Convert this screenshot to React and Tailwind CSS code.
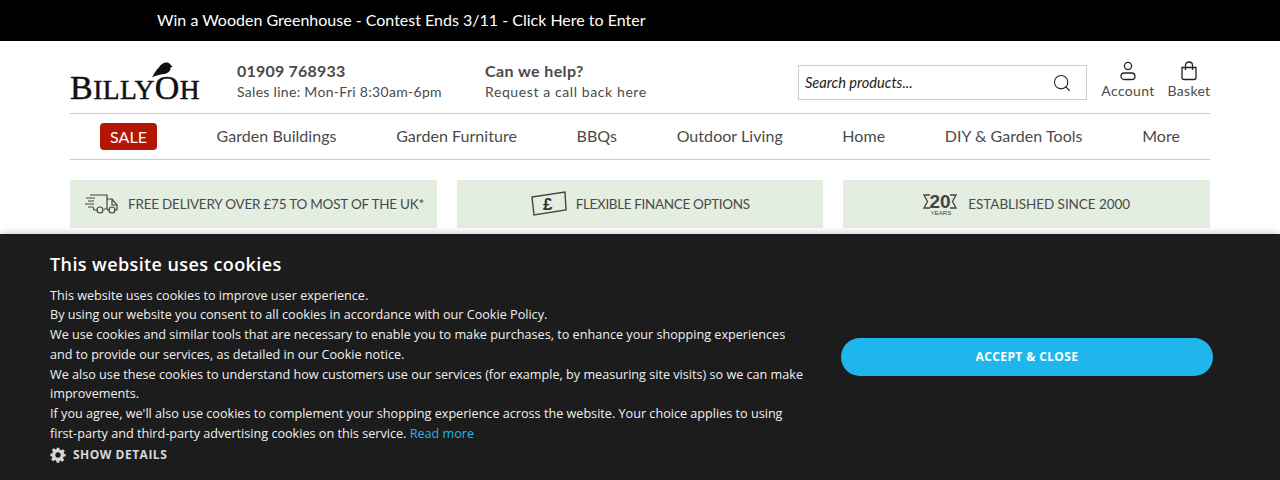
import React from "react";
import { Search } from "lucide-react";

const navLinks = [
  "Garden Buildings",
  "Garden Furniture",
  "BBQs",
  "Outdoor Living",
  "Home",
  "DIY & Garden Tools",
  "More",
];

const BirdLogo = () => (
  <div className="relative w-[130px] h-[40px] shrink-0">
    <div className="absolute left-0 bottom-[-2px] whitespace-nowrap font-['Liberation_Serif',serif] text-[#111] leading-none tracking-[0.45px] [-webkit-text-stroke:0.5px_#111]">
      <span className="text-[34px]">B</span>
      <span className="text-[27.5px]">ILLY</span>
      <span className="text-[34px]">O</span>
      <span className="text-[27.5px]">H</span>
    </div>
    <svg className="absolute left-[82px] top-[-1px]" width="21" height="16" viewBox="2 2 27 19">
      <path d="M2 21 C5 16 7 12 11 8 C13 4 18 1 22 2 C25 3 26 5 27 6 L29 7 L26 8 C26 13 22 17 15 17 C11 18 6 19 2 21Z" fill="#111" />
    </svg>
  </div>
);

const AccountIcon = () => (
  <svg width="18" height="20" viewBox="0 0 18 20" fill="none" stroke="#222" strokeWidth="1.3">
    <circle cx="9" cy="5" r="3.6" />
    <rect x="2" y="12" width="14" height="6.5" rx="3.25" />
  </svg>
);

const BagIcon = () => (
  <svg width="18" height="20" viewBox="0 0 18 20" fill="none" stroke="#222" strokeWidth="1.3">
    <path d="M2 6.5 H16 V16.5 Q16 18.5 14 18.5 H4 Q2 18.5 2 16.5 Z" />
    <path d="M5.5 9 V4.5 Q5.5 1 9 1 Q12.5 1 12.5 4.5 V9" />
  </svg>
);

const TruckIcon = () => (
  <svg width="34" height="22" viewBox="0 0 34 22" fill="none" stroke="#444" strokeWidth="1.2" className="shrink-0">
    <path d="M5 2 H22 V16 H19 M12 17 H9 L8 14 M22 6 H27 L32 12 V17 H29 M22 17 H24" />
    <circle cx="15" cy="17" r="3" />
    <circle cx="27" cy="17" r="3" />
    <path d="M27 6 V12 H32 M1 5 H10 M3 8 H9 M0 11 H9 M3 14 H8" />
  </svg>
);

const PoundIcon = () => (
  <svg width="36" height="26" viewBox="0 0 36 26" fill="none" className="shrink-0">
    <path d="M1 6 L34 1 L35 19 L3 24 Z" stroke="#444" strokeWidth="1.4" />
    <text x="12" y="19" fill="#333" fontSize="17" fontWeight="700" fontFamily="Liberation Sans, sans-serif">£</text>
  </svg>
);

const YearsIcon = () => (
  <svg width="34" height="24" viewBox="0 0 34 24" fill="none" className="shrink-0">
    <path d="M7 3 H1 L4.5 9.5 L1 16 H7" stroke="#444" strokeWidth="1.3" />
    <path d="M27 3 H33 L29.5 9.5 L33 16 H27" stroke="#444" strokeWidth="1.3" />
    <text x="6.5" y="16" fill="#444" fontSize="19" fontWeight="700" fontFamily="Liberation Sans, sans-serif">20</text>
    <text x="7.5" y="23" fill="#444" fontSize="6.2" fontFamily="Liberation Sans, sans-serif">YEARS</text>
  </svg>
);

const GearIcon = () => (
  <svg width="16" height="16" viewBox="0 0 24 24" className="shrink-0">
    <path
      fill="#d8d8d8"
      fillRule="evenodd"
      d="M10 1h4l.7 3.2 1.9.8 2.8-1.8 2.8 2.8-1.8 2.8.8 1.9L23.5 10v4l-3.3.7-.8 1.9 1.8 2.8-2.8 2.8-2.8-1.8-1.9.8L14 23.5h-4l-.7-3.3-1.9-.8-2.8 1.8-2.8-2.8 1.8-2.8-.8-1.9L.5 14v-4l3.3-.7.8-1.9L2.8 4.6l2.8-2.8 2.8 1.8 1.9-.8L10 1Zm2 7a4 4 0 1 0 0 8 4 4 0 0 0 0-8Z"
    />
  </svg>
);

const App = () => {
  return (
    <div className="relative w-[1280px] h-[480px] overflow-hidden bg-white font-['Lato',sans-serif] text-[#4a4a4a]">
      <div className="h-[41px] bg-black flex items-center pl-[157px] pb-[2px] text-white text-[16px]">
        Win a Wooden Greenhouse - Contest Ends 3/11 - Click Here to Enter
      </div>

      <div className="px-[70px]">
        <div className="h-[73px] pt-[11px] flex items-center border-b border-[#ccc]">
          <BirdLogo />
          <div className="ml-[37px] w-[248px] mb-[2px]">
            <div className="text-[16px] leading-[20px] font-bold tracking-[0.2px]">01909 768933</div>
            <div className="text-[14px] leading-[20px] mt-[1px] tracking-[0.3px]">Sales line: Mon-Fri 8:30am-6pm</div>
          </div>
          <div className="mb-[2px]">
            <div className="text-[16px] leading-[20px] font-bold tracking-[0.4px]">Can we help?</div>
            <div className="text-[14px] leading-[20px] mt-[1px] tracking-[0.6px]">Request a call back here</div>
          </div>
          <div className="ml-auto flex items-center">
            <div className="w-[289px] h-[35px] border border-[#ccc] flex items-center justify-between pl-[6px] pr-[14px]">
              <span className="text-[14.6px] italic text-[#222]">Search products...</span>
              <Search size={20} strokeWidth={1.3} className="text-[#222]" />
            </div>
            <div className="ml-[14px] w-[54px] mb-[6px] flex flex-col items-center">
              <AccountIcon />
              <span className="text-[14px] leading-[16px] mt-[2px] tracking-[0.35px]">Account</span>
            </div>
            <div className="ml-[13px] w-[42px] mb-[6px] flex flex-col items-center">
              <BagIcon />
              <span className="text-[14px] leading-[16px] mt-[2px] tracking-[0.3px]">Basket</span>
            </div>
          </div>
        </div>

        <nav className="h-[46px] flex items-center justify-between px-[30px] border-b border-[#ccc] text-[16px]">
          <span className="w-[57px] h-[27px] flex items-center justify-center rounded-[4px] bg-[#b31604] text-white">SALE</span>
          {navLinks.map((link) => (
            <span key={link} className="mb-[2px] tracking-[0.05px]">{link}</span>
          ))}
        </nav>

        <div className="mt-[20px] grid grid-cols-3 gap-[20px] text-[13.5px] whitespace-nowrap">
          <div className="h-[48px] bg-[#e3ede0] flex items-center pl-[15px] gap-[9px] tracking-[-0.22px]">
            <TruckIcon />
            <span>FREE DELIVERY OVER £75 TO MOST OF THE UK*</span>
          </div>
          <div className="h-[48px] bg-[#e3ede0] flex items-center pl-[74px] gap-[9px] tracking-[-0.35px]">
            <PoundIcon />
            <span>FLEXIBLE FINANCE OPTIONS</span>
          </div>
          <div className="h-[48px] bg-[#e3ede0] flex items-center pl-[80px] gap-[11px] tracking-[-0.05px]">
            <YearsIcon />
            <span>ESTABLISHED SINCE 2000</span>
          </div>
        </div>
      </div>

      {/* cookie banner sits over the page */}
      <div className="absolute left-0 right-0 bottom-0 h-[246px] bg-[#1c1c1c] shadow-[0_0_8px_rgba(0,0,0,0.25)] font-['Open_Sans',sans-serif] flex">
        <div className="w-[760px] ml-[50px] shrink-0 pt-[18px]">
          <h1 className="text-[18px] leading-[25px] font-semibold text-white tracking-[0.4px]">This website uses cookies</h1>
          <p className="mt-[8.7px] text-[12.63px] leading-[19.7px] text-[#f0f0f0] w-[756px]">
            This website uses cookies to improve user experience.
            <br />
            By using our website you consent to all cookies in accordance with our Cookie Policy.
            <br />
            We use cookies and similar tools that are necessary to enable you to make purchases, to enhance your shopping experiences and to provide our services, as detailed in our Cookie notice.
            <br />
            We also use these cookies to understand how customers use our services (for example, by measuring site visits) so we can make improvements.
            <br />
            If you agree, we'll also use cookies to complement your shopping experience across the website. Your choice applies to using first-party and third-party advertising cookies on this service.{" "}
            <span className="text-[#1fb6ee]">Read more</span>
          </p>
          <div className="flex items-center gap-[7px] mt-[2px] h-[20px]">
            <GearIcon />
            <span className="text-[12px] font-bold tracking-[0.5px] text-[#d8d8d8]">SHOW DETAILS</span>
          </div>
        </div>
        <div className="ml-[31px] mt-[104px]">
          <div className="w-[372px] h-[38px] rounded-full bg-[#1fb6ee] flex items-center justify-center text-[12px] font-bold tracking-[0.4px] text-white">
            ACCEPT &amp; CLOSE
          </div>
        </div>
      </div>
    </div>
  );
};

export default App;
